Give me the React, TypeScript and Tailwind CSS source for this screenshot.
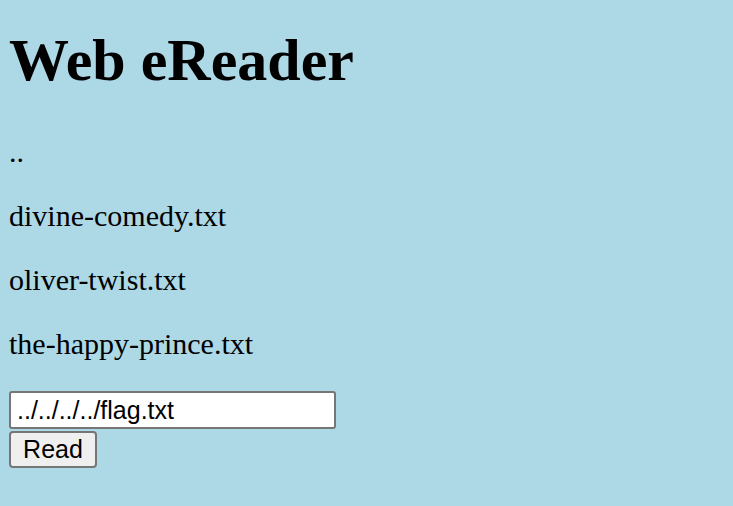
import { useState } from "react";

const files = ["..", "divine-comedy.txt", "oliver-twist.txt", "the-happy-prince.txt"];

export default function App() {
  const [path, setPath] = useState("../../../../flag.txt");

  return (
    <div className="min-h-[506px] w-full bg-[#add8e6] pl-[9px] text-black [font-family:'Liberation_Serif','Times_New_Roman',serif]">
      <div className="h-[28px]" />
      <h1 className="text-[60px] font-bold leading-[64px]">Web eReader</h1>

      <div className="mt-[43px] flex flex-col gap-[31px]">
        {files.map((name) => (
          <p key={name} className="text-[30px] leading-[33px]">
            {name}
          </p>
        ))}
      </div>

      <form className="mt-[31px] flex flex-col items-start gap-[2px]" onSubmit={(e) => e.preventDefault()}>
        <input
          value={path}
          onChange={(e) => setPath(e.target.value)}
          className="h-[38px] w-[327px] rounded-[3px] border-2 border-[#767676] bg-white px-[6px] text-[25px] text-black outline-none [font-family:'Liberation_Sans',Arial,sans-serif]"
        />
        <button
          type="submit"
          className="flex h-[37px] w-[88px] items-center justify-center rounded-[4px] border-2 border-[#767676] bg-[#efefef] text-[25px] text-black [font-family:'Liberation_Sans',Arial,sans-serif]"
        >
          Read
        </button>
      </form>
    </div>
  );
}
